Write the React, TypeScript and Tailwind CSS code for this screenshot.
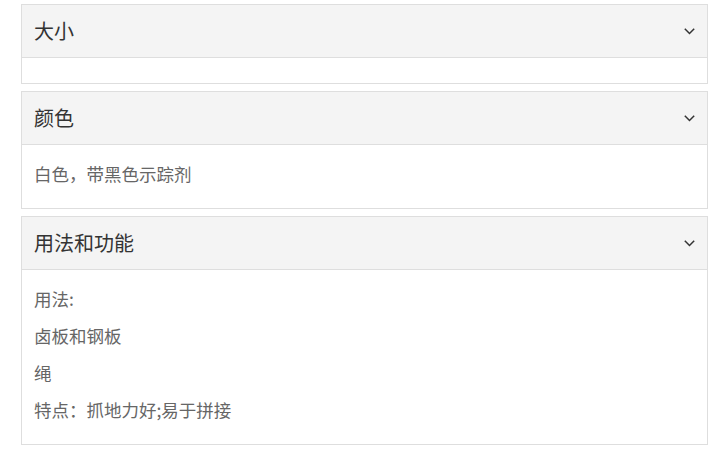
import React from 'react';

interface Section {
  title: string;
  lines: string[];
}

const sections: Section[] = [
  { title: '大小', lines: [] },
  { title: '颜色', lines: ['白色，带黑色示踪剂'] },
  { title: '用法和功能', lines: ['用法:', '卤板和钢板', '绳', '特点：抓地力好;易于拼接'] },
];

const Chevron = () => (
  <svg width="11" height="7" viewBox="0 0 11 7" fill="none" className="shrink-0">
    <polyline points="0.8,0.8 5.5,5.5 10.2,0.8" stroke="#333" strokeWidth="1.5" />
  </svg>
);

const AccordionCard: React.FC<{ section: Section }> = ({ section }) => (
  <div className="border border-[#dedede] bg-white">
    <div className="h-[53px] flex items-center justify-between bg-[#f4f4f4] border-b border-[#dedede] pl-3 pr-[12px]">
      <span className="text-[20px] leading-none text-[#333]">{section.title}</span>
      <Chevron />
    </div>
    {section.lines.length === 0 ? (
      <div className="h-[25px]" />
    ) : (
      <div className="flex flex-col gap-[11px] px-3 pt-4 pb-[21px]">
        {section.lines.map((line) => (
          <p key={line} className="text-[17.5px] leading-[26px] text-[#666]">{line}</p>
        ))}
      </div>
    )}
  </div>
);

export default function App() {
  return (
    <div
      className="min-h-screen bg-white pt-1 pl-[21px]"
      style={{ fontFamily: '"Noto Sans CJK SC", "Microsoft YaHei", sans-serif' }}
    >
      <div className="w-[687px] flex flex-col gap-[7px]">
        {sections.map((s) => (
          <AccordionCard key={s.title} section={s} />
        ))}
      </div>
    </div>
  );
}
